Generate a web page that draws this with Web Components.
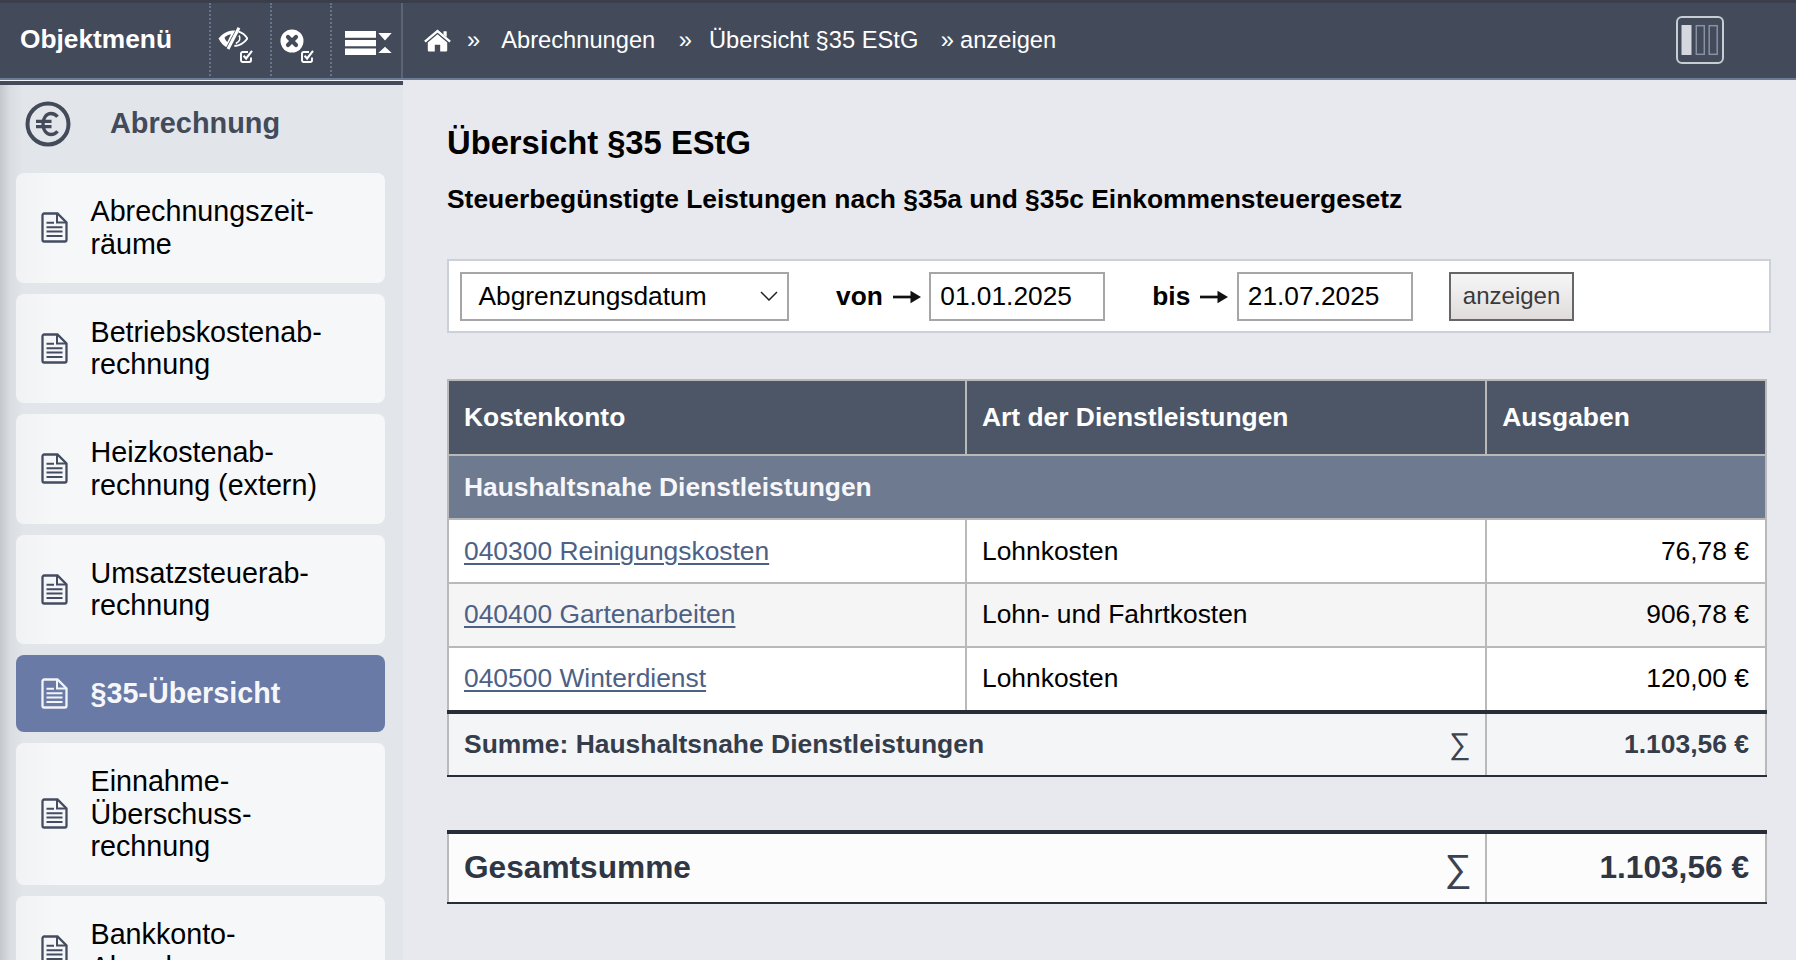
<!DOCTYPE html>
<html lang="de">
<head>
<meta charset="utf-8">
<title>Übersicht §35 EStG</title>
<style>
html,body{margin:0;height:100%;overflow:hidden;background:#e8e9ee;font-family:"Liberation Sans",Arial,sans-serif;color:#000}
</style>
</head>
<body>
<app-shell>
  <top-bar slot="top" heading="Objektmenü">
    <tool-button icon="eye" badge></tool-button>
    <tool-button icon="close" badge></tool-button>
    <tool-button icon="list" last></tool-button>
    <bread-crumbs slot="crumbs">
      <span class="c1">Abrechnungen</span>
      <span class="s2">»</span>
      <span class="c2">Übersicht §35 EStG</span>
      <span class="s3">»</span>
      <span class="c3">anzeigen</span>
    </bread-crumbs>
  </top-bar>
  <side-nav slot="side" heading="Abrechnung">
    <nav-item>Abrechnungszeit-<br>räume</nav-item>
    <nav-item>Betriebskostenab-<br>rechnung</nav-item>
    <nav-item>Heizkostenab-<br>rechnung (extern)</nav-item>
    <nav-item>Umsatzsteuerab-<br>rechnung</nav-item>
    <nav-item active>§35-Übersicht</nav-item>
    <nav-item>Einnahme-<br>Überschuss-<br>rechnung</nav-item>
    <nav-item>Bankkonto-<br>Abrechnung</nav-item>
  </side-nav>
  <report-page>
    <span slot="title">Übersicht §35 EStG</span>
    <span slot="subtitle">Steuerbegünstigte Leistungen nach §35a und §35c Einkommensteuergesetz</span>
    <filter-bar slot="filter" kind="Abgrenzungsdatum" from="01.01.2025" to="21.07.2025" action="anzeigen"></filter-bar>
    <report-table slot="table">
      <report-row kind="head"><span slot="a">Kostenkonto</span><span slot="b">Art der Dienstleistungen</span><span slot="c">Ausgaben</span></report-row>
      <report-row kind="group"><span slot="a">Haushaltsnahe Dienstleistungen</span></report-row>
      <report-row kind="row"><a slot="a" href="#">040300 Reinigungskosten</a><span slot="b">Lohnkosten</span><span slot="c">76,78 €</span></report-row>
      <report-row kind="row" alt><a slot="a" href="#">040400 Gartenarbeiten</a><span slot="b">Lohn- und Fahrtkosten</span><span slot="c">906,78 €</span></report-row>
      <report-row kind="row" last><a slot="a" href="#">040500 Winterdienst</a><span slot="b">Lohnkosten</span><span slot="c">120,00 €</span></report-row>
      <report-row kind="sum"><span slot="a">Summe: Haushaltsnahe Dienstleistungen</span><span slot="b">∑</span><span slot="c">1.103,56 €</span></report-row>
    </report-table>
    <report-table slot="total">
      <report-row kind="total"><span slot="a">Gesamtsumme</span><span slot="b">∑</span><span slot="c">1.103,56 €</span></report-row>
    </report-table>
  </report-page>
</app-shell>

<script>
const shadow = (el, html) => { el.attachShadow({mode:'open'}).innerHTML = html; };

const BADGE = `<svg class="badge" viewBox="0 0 13 14" width="13" height="14" fill="none" stroke="#fff"><path d="M11 8.500v2.800a1.700 1.700 0 0 1-1.700 1.700H2.700A1.700 1.700 0 0 1 1 11.300V4.700A1.700 1.700 0 0 1 2.700 3H8" stroke-width="1.900"/><path d="M3.600 6.700l2.500 2.800L12 1.800" stroke-width="2.100"/></svg>`;
const ICONS = {
  eye:`<svg class="i" viewBox="0 0 30 23" width="30" height="23" style="left:7px;top:24px"><path fill="#fff" d="M.5 11.500C4 7 9 4 15 3.500h3.500L10 21C6 19.500 3 16 .5 11.500z"/><path fill="#434a5a" d="M6.500 10.800C8 9 10 7.800 13 7.200L9.300 15C8 13.800 7 12.300 6.500 10.800z"/><path d="M21.500 .8L10 22.200" stroke="#434a5a" stroke-width="5"/><path d="M21 .8L10 22" stroke="#fff" stroke-width="3"/><path d="M20.500 4.600c3.800 1 6.800 3.400 8.900 6.900-2.800 4-7.300 7-13 7.500" fill="none" stroke="#fff" stroke-width="1.900"/><path d="M21 8.500c1.800 2.600 1 6-3.200 8" fill="none" stroke="#fff" stroke-width="1.600"/></svg>`,
  close:`<svg class="i" viewBox="0 0 24 24" width="24" height="24" style="left:8.500px;top:26px"><circle cx="12" cy="12" r="11.500" fill="#fff"/><path d="M8 8l8 8M16 8l-8 8" stroke="#434a5a" stroke-width="4.200" stroke-linecap="round"/></svg>`,
  list:`<svg class="i" viewBox="0 0 47 24" width="47" height="24" style="left:13px;top:27.700px"><path fill="#fff" d="M0 0h31v6.800H0zM0 9h31v6.200H0zM0 17.400h31V24H0zM33.300 2h13.400L40 9.400zM33.300 22h13.400L40 15.800z"/></svg>`
};
const DOC = (c) => `<svg viewBox="0 0 27 31" width="27" height="31" fill="none" stroke="${c}" stroke-width="2.300"><path d="M3.200 1.500h13.300l9 9v17.300a1.700 1.700 0 0 1-1.700 1.700H3.200a1.700 1.700 0 0 1-1.700-1.700V3.200a1.700 1.700 0 0 1 1.700-1.700z"/><path d="M16 2v8.500h9" stroke-width="2"/><path d="M5.500 10.800h7.500M5.500 15.200h16M5.500 19.600h16M5.500 24h16" stroke-width="2"/></svg>`;

customElements.define('app-shell', class extends HTMLElement{
  constructor(){super();shadow(this,`<style>
    :host{display:grid;grid-template-columns:403px 1fr;grid-template-rows:80px 880px;height:960px;overflow:hidden}
    .t{grid-column:1/3}
    .s{min-height:0;overflow:hidden}
  </style>
  <div class="t"><slot name="top"></slot></div>
  <div class="s"><slot name="side"></slot></div>
  <main><slot></slot></main>`);}
});

customElements.define('top-bar', class extends HTMLElement{
  constructor(){super();shadow(this,`<style>
    :host{display:flex;align-items:center;box-sizing:border-box;height:80px;background:#434a5a;border-top:3px solid #3a3f4b;border-bottom:2px solid #6b7c94;color:#fff}
    .left{display:flex;align-self:stretch;width:403px;flex:none;box-sizing:border-box;border-right:2px solid #5a6577}
    h2{width:189px;margin:0;padding-left:20px;font-size:26.300px;font-weight:700;line-height:73px;white-space:nowrap;flex:none}
    .cr{flex:1;display:flex;align-items:center;min-width:0}
    .layout{flex:none;margin-right:73.500px;display:block;margin-top:-1px}
  </style>
  <div class="left"><h2></h2><slot></slot></div>
  <div class="cr"><slot name="crumbs"></slot></div>
  <svg class="layout" viewBox="0 0 48 48" width="48" height="48"><rect x="1" y="1" width="46" height="46" rx="5" fill="none" stroke="#c8cdd4" stroke-width="2"/><rect x="5.500" y="9" width="10" height="30" fill="#d5d9df"/><rect x="20.300" y="9.700" width="8" height="28.600" fill="none" stroke="#8892a2" stroke-width="1.500"/><rect x="33.200" y="9.700" width="8" height="28.600" fill="none" stroke="#8892a2" stroke-width="1.500"/></svg>`);
    this.shadowRoot.querySelector('h2').textContent=this.getAttribute('heading');
  }
});

customElements.define('tool-button', class extends HTMLElement{
  constructor(){super();
    const i=this.getAttribute('icon');
    shadow(this,`<style>
    :host{display:block;position:relative;flex:none;box-sizing:border-box;height:73px;width:${i==='list'?72:60.500}px;border-left:2px dotted #66758c}
    svg{position:absolute}
    .badge{left:29px;top:46px}
  </style>${ICONS[i]}${this.hasAttribute('badge')?BADGE:''}`);
  }
});

customElements.define('bread-crumbs', class extends HTMLElement{
  constructor(){super();shadow(this,`<style>
    :host{display:flex;align-items:center;font-size:23.700px;color:#fff;white-space:pre;padding-left:20.500px;margin-top:-1px}
    svg{flex:none;display:block}
    .s{margin-left:16.500px;margin-right:21px}
    ::slotted(.c1){margin-right:23.500px}
    ::slotted(.s2){margin-right:17px}
    ::slotted(.c2){margin-right:22.500px}
    ::slotted(.s3){margin-right:6px}
  </style>
  <svg viewBox="0 0 27 23" width="27" height="23"><path fill="#fff" d="M13.500 5.200L3.800 13.400v8a1.100 1.100 0 0 0 1.100 1.100h5.900v-6.700h5.400v6.700h5.900a1.100 1.100 0 0 0 1.100-1.100v-8z"/><path fill="none" stroke="#fff" stroke-width="2.400" d="M.9 12.600L13.500 2l12.600 10.600"/><path fill="#fff" d="M19.500 2.200h3.200v5.800l-3.200-2.600z"/></svg>
  <span class="s">»</span><slot></slot>`);
  }
});

customElements.define('side-nav', class extends HTMLElement{
  constructor(){super();shadow(this,`<style>
    :host{display:block;box-sizing:border-box;height:880px;overflow:hidden;border-top:1px solid #f1f3f6;background:linear-gradient(90deg,#c4c7cc 0,#d9dce1 10px,#e2e5ea 24px)}
    header{box-sizing:border-box;height:92px;border-top:4px solid #434a5a;display:flex;align-items:center;padding-left:25px;padding-bottom:10px;color:#434a5a}
    h2{margin:-2px 0 0 39px;font-size:28.900px;font-weight:700;line-height:1}
    svg{display:block;flex:none}
    .items{display:flex;flex-direction:column;gap:11px;padding:0 18px 0 16px}
  </style>
  <header><svg viewBox="0 0 46 46" width="46" height="46" fill="none" stroke="#434a5a"><circle cx="23" cy="23" r="20.500" stroke-width="4"/><path d="M33.500 15.800c-1.700-2.200-4-3.300-6.500-3.300-4.700 0-8 4.400-8 10.500s3.300 10.500 8 10.500c2.500 0 4.800-1.100 6.500-3.300M12 20.300h15.500M12 25.700h15.500" stroke-width="3.300" transform="translate(-1)"/></svg><h2></h2></header>
  <div class="items"><slot></slot></div>`);
    this.shadowRoot.querySelector('h2').textContent=this.getAttribute('heading');
  }
});

customElements.define('nav-item', class extends HTMLElement{
  constructor(){super();
    const on=this.hasAttribute('active');
    shadow(this,`<style>
    :host{display:flex;align-items:center;box-sizing:border-box;padding:22px 10px 22px 25px;border-radius:8px;font-size:28.700px;line-height:32.750px;
      background:${on?'#687aa5':'linear-gradient(90deg,#f1f2f4,#f6f7f9 40px)'};color:${on?'#f6f6fb':'#000'};font-weight:${on?700:400}}
    svg{display:block;flex:none;margin-right:22.500px}
  </style>${DOC(on?'#f3f4f8':'#434c60')}<div><slot></slot></div>`);
  }
});

customElements.define('report-page', class extends HTMLElement{
  constructor(){super();shadow(this,`<style>
    :host{display:block;padding:44px 26px 0 44px}
    h1{margin:0 0 21.500px;font-size:32.750px;font-weight:700;line-height:38px}
    h3{margin:0 0 45.500px;font-size:26.420px;font-weight:700;line-height:30px;white-space:nowrap}
    ::slotted([slot=filter]){margin-bottom:45.500px}
    ::slotted([slot=table]){margin-bottom:53px}
  </style>
  <h1><slot name="title"></slot></h1>
  <h3><slot name="subtitle"></slot></h3>
  <slot name="filter"></slot>
  <slot name="table"></slot>
  <slot name="total"></slot>`);}
});

const CHEV=`<svg viewBox="0 0 18 10" width="18" height="10" fill="none" stroke="#222" stroke-width="1.500"><path d="M1 1l8 8 8-8"/></svg>`;
const ARROW=`<svg viewBox="0 0 28 14" width="28" height="14"><path d="M0 7h20" stroke="#111" stroke-width="2.700"/><path d="M17.500 .8l10.500 6.200-10.500 6.200z" fill="#111"/></svg>`;
customElements.define('filter-bar', class extends HTMLElement{
  constructor(){super();
    const g=k=>this.getAttribute(k);
    shadow(this,`<style>
    :host{display:flex;align-items:center;box-sizing:border-box;width:1324px;height:74px;background:#fff;border:2px solid #ccd1d9;padding:0 0 0 11px;font-size:26.300px}
    .f{box-sizing:border-box;height:49px;border:2px solid #a6a6a6;background:#fff;display:flex;align-items:center;flex:none}
    .sel{width:329px;padding:0 9.500px 0 16.500px;justify-content:space-between;margin-right:47px}
    .in{padding-left:9px;width:176px}
    b{font-weight:700;flex:none}
    svg{display:block;flex:none}
    .a{margin:1px 8.500px 0 10px}
    .in.one{margin-right:47px}
    button{box-sizing:border-box;height:49px;width:125.600px;margin-left:36px;padding:0;border:2px solid #666;border-radius:0;background:linear-gradient(#f7f6f6,#e0dcdc);font:24px "Liberation Sans",Arial,sans-serif;color:#3a3a3a;flex:none}
  </style>
  <div class="f sel"><span>${g('kind')}</span>${CHEV}</div>
  <b>von</b><span class="a">${ARROW}</span><div class="f in one"><span>${g('from')}</span></div>
  <b>bis</b><span class="a">${ARROW}</span><div class="f in"><span>${g('to')}</span></div>
  <button type="button">${g('action')}</button>`);
  }
});

customElements.define('report-table', class extends HTMLElement{
  constructor(){super();shadow(this,`<style>:host{display:block;width:1320px}</style><slot></slot>`);}
});

customElements.define('report-row', class extends HTMLElement{
  constructor(){super();shadow(this,`<style>
    :host{display:grid;grid-template-columns:517.500px 520.200px 282.300px;box-sizing:border-box;font-size:26.400px;background:#fff}
    .c{box-sizing:border-box;display:flex;align-items:center;border-left:2px solid #b9b9b9;padding:0 16px 0 15.500px;white-space:nowrap;min-width:0}
    .a{padding-left:15px}
    .z{border-right:2px solid #b9b9b9;justify-content:flex-end}
    ::slotted(a){color:#4d6185;text-decoration:underline;text-underline-offset:3px;text-decoration-thickness:1.500px}

    :host([kind=head]){height:77.500px;background:#4d5667;color:#fff;font-weight:700;border-top:2px solid #b9b9b9;border-bottom:2px solid #b9b9b9}
    :host([kind=head]) .z{justify-content:flex-start}

    :host([kind=group]){height:64px;background:#6e7a90;color:#f6f6fb;font-weight:700;border-bottom:2px solid #b9b9b9}
    :host([kind=group]) .b{display:none}
    :host([kind=group]) .a{grid-column:1/3;}
    :host([kind=group]) .z{border-left:0;justify-content:flex-start}

    :host([kind=row]){height:64px;border-bottom:2px solid #b9b9b9}
    :host([kind=row][alt]){background:#f5f5f5}
    :host([kind=row][alt]) .c,:host([kind=row][last]) .c{padding-bottom:2px}
    :host([kind=row][last]){height:62px;border-bottom:0}

    :host([kind=sum]){height:67px;background:#f4f5f7;color:#363d4a;font-weight:700;font-size:26.450px;border-top:4px solid #272e38;border-bottom:2px solid #272e38}
    :host([kind=sum]) .a{grid-column:1/2}
    :host([kind=sum]) .b,:host([kind=total]) .b{border-left:0;justify-content:flex-end;padding-right:14px;font-weight:400;font-size:30px;color:#3b4250}
    :host([kind=sum]) .b{padding-bottom:2px}

    :host([kind=total]){height:74px;background:#fcfcfc;color:#2f3644;font-weight:700;font-size:31.650px;border-top:4px solid #272e38;border-bottom:2px solid #272e38}
    :host([kind=total]) .a,:host([kind=total]) .z{padding-bottom:2px}
    :host([kind=total]) .b{font-size:38px;padding-right:13px}
  </style>
  <div class="c a"><slot name="a"></slot></div>
  <div class="c b"><slot name="b"></slot></div>
  <div class="c z"><slot name="c"></slot></div>`);}
});
</script>
</body>
</html>
